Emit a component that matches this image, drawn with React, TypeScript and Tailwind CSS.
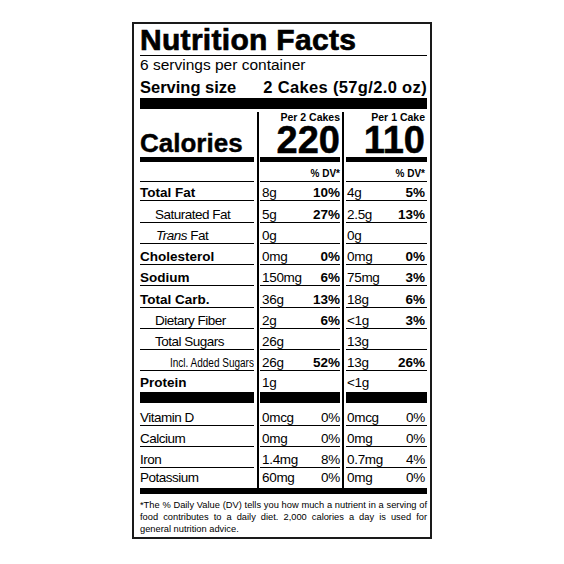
import { FC, ReactNode } from "react";

interface RowProps {
    h: string;
    line: string;
    label: ReactNode;
    c1?: ReactNode;
    c2?: ReactNode;
}

// one table row: label cell + two value cells, vertical rules come from border-l
const Row: FC<RowProps> = ({ h, line, label, c1, c2 }) => (
    <div className={`flex ${h}`}>
        <div className="w-[117px] shrink-0 pr-[3px]">
            <div className={`flex h-full items-end ${line}`}>{label}</div>
        </div>
        <div className="w-[85px] shrink-0 border-l-2 border-black pl-[1px] pr-[2px]">
            <div className={`flex h-full items-end justify-between pl-[2px] ${line}`}>
                {c1}
            </div>
        </div>
        <div className="w-[85px] shrink-0 border-l-2 border-black pl-[2px]">
            <div className={`flex h-full items-end justify-between pl-[1px] pr-[2px] ${line}`}>
                {c2}
            </div>
        </div>
    </div>
);

const Val: FC<{ v: string; p?: string; boldPct?: boolean }> = ({ v, p, boldPct = true }) => (
    <>
        <span className="text-[13.5px] leading-none tracking-[-0.3px]">{v}</span>
        {p && (
            <span
                className={
                    boldPct
                        ? "text-[13.5px] font-bold leading-none"
                        : "text-[13.5px] leading-none tracking-[-0.2px]"
                }
            >
                {p}
            </span>
        )}
    </>
);

const bold = "text-[13.5px] font-bold leading-none";
const reg = "text-[13.5px] leading-none tracking-[-0.5px]";

const nutrients = [
    { label: <span className={bold}>Total Fat</span>, h: "h-[19px]", v1: "8g", p1: "10%", v2: "4g", p2: "5%" },
    { label: <span className={`${reg} pl-[15px]`}>Saturated Fat</span>, h: "h-[22px]", v1: "5g", p1: "27%", v2: "2.5g", p2: "13%" },
    {
        label: (
            <span className={`${reg} pl-[16px]`}>
                <i>Trans</i> Fat
            </span>
        ),
        h: "h-[21px]",
        v1: "0g",
        v2: "0g",
    },
    { label: <span className={bold}>Cholesterol</span>, h: "h-[21px]", v1: "0mg", p1: "0%", v2: "0mg", p2: "0%" },
    { label: <span className={bold}>Sodium</span>, h: "h-[21px]", v1: "150mg", p1: "6%", v2: "75mg", p2: "3%" },
    { label: <span className={bold}>Total Carb.</span>, h: "h-[22px]", v1: "36g", p1: "13%", v2: "18g", p2: "6%" },
    { label: <span className={`${reg} pl-[15px]`}>Dietary Fiber</span>, h: "h-[21px]", v1: "2g", p1: "6%", v2: "<1g", p2: "3%" },
    { label: <span className={`${reg} pl-[15px]`}>Total Sugars</span>, h: "h-[21px]", v1: "26g", v2: "13g" },
    {
        label: (
            <span className="ml-[30px] inline-block origin-left scale-x-[0.8] whitespace-nowrap text-[12.5px] leading-none">
                Incl. Added Sugars
            </span>
        ),
        h: "h-[21px]",
        v1: "26g",
        p1: "52%",
        v2: "13g",
        p2: "26%",
    },
];

const vitamins = [
    { label: "Vitamin D", h: "h-[23px]", v1: "0mcg", p1: "0%", v2: "0mcg", p2: "0%" },
    { label: "Calcium", h: "h-[21px]", v1: "0mg", p1: "0%", v2: "0mg", p2: "0%" },
    { label: "Iron", h: "h-[21px]", v1: "1.4mg", p1: "8%", v2: "0.7mg", p2: "4%" },
];

const App = () => {
    const thin = "border-b border-black pb-[1px]";

    return (
        <div className="min-h-screen bg-white pt-[22px] font-['Liberation_Sans',Arial,Helvetica,sans-serif] text-black">
            <div className="mx-auto w-[300px] border-2 border-[#1a1a1a] pb-[2px] pl-[6px] pr-[3px] pt-[1px]">
                <h1 className="border-b border-black text-[30px] font-bold leading-[30px] tracking-[0.3px] [-webkit-text-stroke:0.7px_black]">
                    Nutrition Facts
                </h1>
                <div className="mt-[1px] text-[15.5px] leading-[16px]">6 servings per container</div>
                <div className="mt-[5px] flex justify-between text-[16.5px] font-bold leading-[18px]">
                    <span>Serving size</span>
                    <span className="tracking-[0.35px]">2 Cakes (57g/2.0 oz)</span>
                </div>
                <div className="mt-[2px] h-[11px] bg-black" />

                <div className="mt-[3px]">
                    {/* calories */}
                    <div className="flex h-[50px]">
                        <div className="w-[117px] shrink-0 pr-[3px]">
                            <div className="flex h-full items-end border-b-[5px] border-black">
                                <span className="text-[26px] font-bold leading-[28px] [-webkit-text-stroke:0.4px_black]">
                                    Calories
                                </span>
                            </div>
                        </div>
                        <div className="w-[85px] shrink-0 border-l-2 border-black pl-[1px] pr-[2px]">
                            <div className="flex h-full flex-col items-end border-b-[5px] border-black">
                                <span className="h-[12px] text-[10.5px] font-bold leading-[11px]">Per 2 Cakes</span>
                                <span className="h-[33px] text-[38px] font-bold leading-[32px] [-webkit-text-stroke:0.5px_black]">
                                    220
                                </span>
                            </div>
                        </div>
                        <div className="w-[85px] shrink-0 border-l-2 border-black pl-[2px]">
                            <div className="flex h-full flex-col items-end border-b-[5px] border-black pr-[2px]">
                                <span className="h-[12px] text-[10.5px] font-bold leading-[11px]">Per 1 Cake</span>
                                <span className="h-[33px] text-[38px] font-bold leading-[32px] [-webkit-text-stroke:0.5px_black]">
                                    110
                                </span>
                            </div>
                        </div>
                    </div>

                    <Row
                        h="h-[20px]"
                        line="border-b border-black pb-[2px]"
                        label={null}
                        c1={
                            <span className="ml-auto text-[10px] font-bold leading-none">% DV*</span>
                        }
                        c2={
                            <span className="ml-auto text-[10px] font-bold leading-none">% DV*</span>
                        }
                    />

                    {nutrients.map((n, i) => (
                        <Row
                            key={i}
                            h={n.h}
                            line={thin}
                            label={n.label}
                            c1={<Val v={n.v1} p={n.p1} />}
                            c2={<Val v={n.v2} p={n.p2} />}
                        />
                    ))}
                    <Row
                        h="h-[21px]"
                        line="pb-[3px]"
                        label={<span className={bold}>Protein</span>}
                        c1={<Val v="1g" />}
                        c2={<Val v="<1g" />}
                    />
                    <Row h="h-[11px]" line="bg-black" label={null} />

                    {vitamins.map((n, i) => (
                        <Row
                            key={i}
                            h={n.h}
                            line={thin}
                            label={<span className={reg}>{n.label}</span>}
                            c1={<Val v={n.v1} p={n.p1} boldPct={false} />}
                            c2={<Val v={n.v2} p={n.p2} boldPct={false} />}
                        />
                    ))}
                    <Row
                        h="h-[20px]"
                        line="pb-[4px]"
                        label={<span className={reg}>Potassium</span>}
                        c1={<Val v="60mg" p="0%" boldPct={false} />}
                        c2={<Val v="0mg" p="0%" boldPct={false} />}
                    />
                    <div className="h-[6px] bg-black" />
                </div>

                <div className="mt-[5px] text-[9.3px] leading-[12px]">
                    <div className="text-justify [text-align-last:justify]">
                        *The % Daily Value (DV) tells you how much a nutrient in a serving of
                    </div>
                    <div className="text-justify [text-align-last:justify]">
                        food contributes to a daily diet. 2,000 calories a day is used for
                    </div>
                    <div>general nutrition advice.</div>
                </div>
            </div>
        </div>
    );
};

export default App;
